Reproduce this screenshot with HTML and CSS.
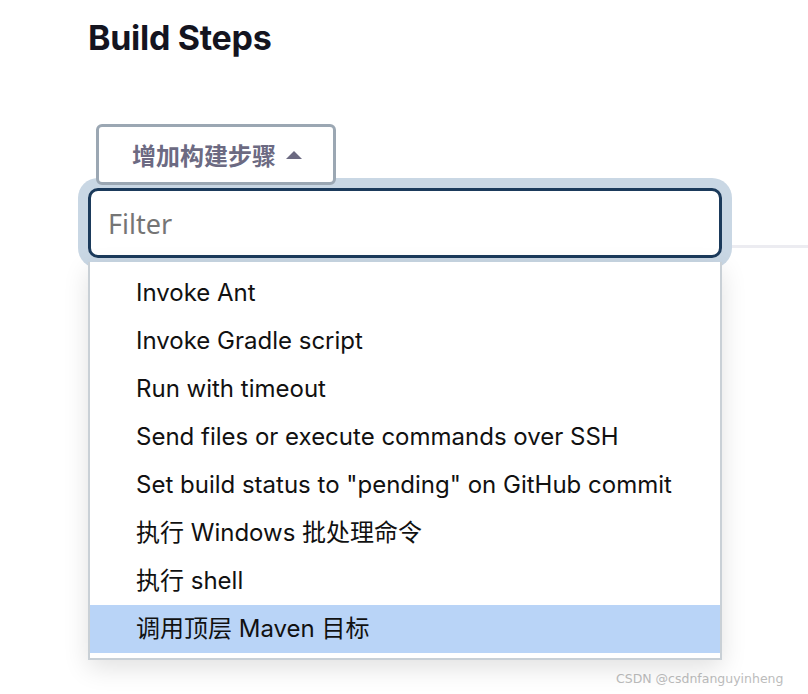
FILE: index.html
```html
<!DOCTYPE html>
<html>
<head>
<meta charset="utf-8">
<link rel="stylesheet" href="styles.css">
</head>
<body>
<div class="page">
  <div class="divider"></div>
  <h2 class="title">Build Steps</h2>
  <button class="add-btn">增加构建步骤 <span class="caret"></span></button>
  <div class="filter"><span class="placeholder">Filter</span></div>
  <ul class="menu">
    <li>Invoke Ant</li>
    <li>Invoke Gradle script</li>
    <li>Run with timeout</li>
    <li>Send files or execute commands over SSH</li>
    <li>Set build status to "pending" on GitHub commit</li>
    <li>执行 Windows 批处理命令</li>
    <li>执行 shell</li>
    <li class="active">调用顶层 Maven 目标</li>
  </ul>
  <div class="watermark">CSDN @csdnfanguyinheng</div>
</div>
</body>
</html>
```
FILE: styles.css
```css
* { box-sizing: border-box; }
html, body { margin: 0; padding: 0; background: #fff; }
body {
  font-family: Inter, "Noto Sans CJK SC", sans-serif;
  color: #14141f;
}
.page {
  position: relative;
  width: 808px;
  height: 694px;
  padding: 18px 0 0 88px;
  overflow: hidden;
}
.divider {
  position: absolute;
  left: 731px;
  top: 245px;
  width: 90px;
  height: 3px;
  background: #ececf1;
}
.title {
  margin: 0;
  font-size: 34px;
  font-weight: 700;
  line-height: 40px;
  letter-spacing: -0.3px;
  color: #14141f;
}
.add-btn {
  display: flex;
  align-items: center;
  gap: 8px;
  margin: 66px 0 0 8px;
  width: 240px;
  height: 61px;
  padding: 0 0 0 33px;
  background: #fff;
  border: 3px solid #9ba7b3;
  border-radius: 6px;
  font-family: Inter, "Noto Sans CJK SC", sans-serif;
  font-size: 24px;
  font-weight: 600;
  color: #6c6a82;
  position: relative;
  z-index: 2;
}
.caret {
  width: 0;
  height: 0;
  border-left: 8px solid transparent;
  border-right: 8px solid transparent;
  border-bottom: 8px solid #6c6a82;
  margin-left: 2px;
}
.filter {
  margin-top: 3px;
  width: 634px;
  height: 70px;
  border: 3px solid #1b3a5b;
  border-radius: 10px;
  box-shadow: 0 0 0 10px #c9d7e4;
  display: flex;
  align-items: center;
  padding-left: 17px;
  background: #fff;
  position: relative;
  z-index: 1;
}
.placeholder {
  font-size: 27px;
  color: #757575;
  font-family: "Noto Sans", Inter, sans-serif;
}
.menu {
  list-style: none;
  margin: 4px 0 0 0;
  padding: 7px 0 5px 0;
  width: 634px;
  border: 2px solid #c9d0d6;
  border-top: none;
  background: #fff;
  box-shadow: 0 8px 24px rgba(0,0,0,0.12);
  position: relative;
  z-index: 3;
}
.menu li {
  height: 48px;
  line-height: 48px;
  padding-left: 46px;
  font-size: 24px;
  color: #111;
  font-family: Inter, "Noto Sans CJK SC", sans-serif;
}
.menu li.active {
  background: #b9d4f7;
}
.watermark {
  position: absolute;
  left: 616px;
  top: 671px;
  font-family: "DejaVu Sans", sans-serif;
  font-size: 12.5px;
  color: #bcbcbc;
}
```
